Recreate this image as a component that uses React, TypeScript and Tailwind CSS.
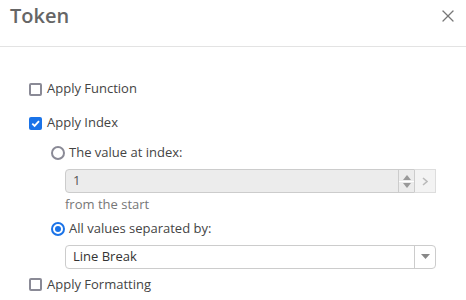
import { X } from "lucide-react";

const Checkbox = ({ checked, label }: { checked?: boolean; label: string }) => (
  <label className="flex items-center gap-[5px] h-[20px]">
    {checked ? (
      <span className="w-[13px] h-[13px] rounded-[2px] bg-[#1a73e8] flex items-center justify-center">
        <svg width="11" height="11" viewBox="0 0 12 12">
          <path d="M2.5 6.2 L5 8.6 L9.8 3.4" stroke="white" strokeWidth="2" fill="none" />
        </svg>
      </span>
    ) : (
      <span className="w-[13px] h-[13px] rounded-[2px] border-2 border-[#8a8a96] bg-white" />
    )}
    <span>{label}</span>
  </label>
);

const Radio = ({ checked, label }: { checked?: boolean; label: string }) => (
  <label className="flex items-center gap-[4px] h-[20px]">
    {checked ? (
      <span className="w-[14px] h-[14px] rounded-full border-2 border-[#1a73e8] flex items-center justify-center">
        <span className="w-[6px] h-[6px] rounded-full bg-[#1a73e8]" />
      </span>
    ) : (
      <span className="w-[14px] h-[14px] rounded-full border-2 border-[#8a8a96]" />
    )}
    <span>{label}</span>
  </label>
);

export default function App() {
  return (
    <div
      className="w-[466px] h-[300px] bg-white text-[#444] text-[13px] overflow-hidden"
      style={{ fontFamily: '"Open Sans", sans-serif' }}
    >
      <div className="h-[47px] px-[10px] flex items-center justify-between border-b border-[#e3e3e3]">
        <h1 className="text-[20px] text-[#666] font-semibold -mt-[14px]">Token</h1>
        <X size={20} strokeWidth={1.5} className="text-[#777] -mt-[14px] -mr-[2px]" />
      </div>

      <div className="pl-[29px] pt-[32px]">
        <Checkbox label="Apply Function" />
        <div className="mt-[14px]">
          <Checkbox checked label="Apply Index" />
        </div>
        <div className="pl-[22px] mt-[10px]">
          <Radio label="The value at index:" />
          <div className="pl-[14px] mt-[6px]">
            <div className="flex items-center">
              <div className="w-[350px] h-[24px] rounded-l-[4px] border border-[#ccc] bg-[#ececec] flex items-center justify-between pl-[7px]">
                <span className="text-[#555]">1</span>
                <div className="w-[16px] h-[22px] border-l border-[#ccc] rounded-r-[4px] flex flex-col items-center justify-center gap-[1px]">
                  <svg width="8" height="5" viewBox="0 0 8 5">
                    <path d="M0 5 L4 0 L8 5 Z" fill="#999" />
                  </svg>
                  <div className="w-full h-px bg-white" />
                  <svg width="8" height="5" viewBox="0 0 8 5">
                    <path d="M0 0 L4 5 L8 0 Z" fill="#999" />
                  </svg>
                </div>
              </div>
              <div className="w-[21px] h-[24px] border border-l-0 border-[#ddd] bg-[#f3f3f3] flex items-center justify-center">
                <svg width="6" height="9" viewBox="0 0 6 9">
                  <path d="M1 1 L5 4.5 L1 8" stroke="#bbb" strokeWidth="1.6" fill="none" />
                </svg>
              </div>
            </div>
            <div className="text-[#777] mt-[2px]">from the start</div>
          </div>
          <div className="mt-[4px]">
            <Radio checked label="All values separated by:" />
          </div>
          <div className="pl-[14px] mt-[6px]">
            <div className="w-[371px] h-[24px] rounded-[4px] border border-[#ccc] bg-white flex items-center justify-between">
              <span className="pl-[7px] text-[#333]">Line Break</span>
              <div className="w-[21px] h-full border-l border-[#ccc] flex items-center justify-center">
                <svg width="9" height="5" viewBox="0 0 9 5">
                  <path d="M0 0 L4.5 5 L9 0 Z" fill="#888" />
                </svg>
              </div>
            </div>
          </div>
        </div>
        <div className="mt-[6px]">
          <Checkbox label="Apply Formatting" />
        </div>
      </div>
    </div>
  );
}
